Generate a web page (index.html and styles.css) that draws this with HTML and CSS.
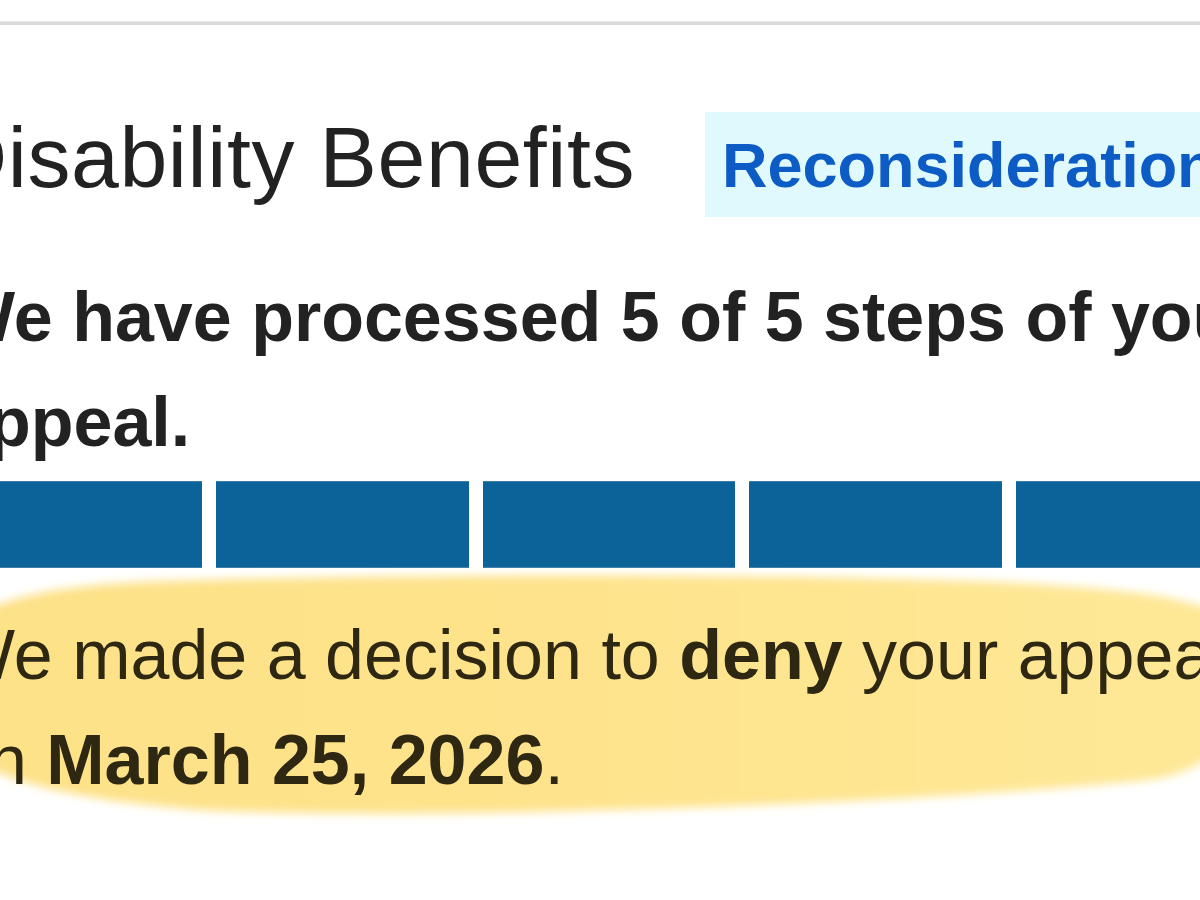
FILE: index.html
```html
<!DOCTYPE html>
<html lang="en">
<head>
<meta charset="utf-8">
<title>Disability Benefits – Reconsideration</title>
<link rel="stylesheet" href="styles.css">
</head>
<body>
<div class="topline"></div>
<main class="content">
  <header class="header">
    <h1 class="title">Disability Benefits</h1>
    <span class="badge">Reconsideration</span>
  </header>
  <p class="steps-text">We have processed 5 of 5 steps of your<br>appeal.</p>
  <div class="bar">
    <div class="seg"></div>
    <div class="seg"></div>
    <div class="seg"></div>
    <div class="seg"></div>
    <div class="seg"></div>
  </div>
  <div class="decision">
    <svg class="highlight" width="1320" height="300" viewBox="0 0 1320 300" aria-hidden="true">
      <defs>
        <filter id="soft" x="-10%" y="-30%" width="120%" height="160%">
          <feGaussianBlur stdDeviation="5"/>
        </filter>
        <linearGradient id="hl" x1="0" y1="0" x2="1" y2="0">
          <stop offset="0" stop-color="#fde187"/>
          <stop offset="0.5" stop-color="#fee38c"/>
          <stop offset="1" stop-color="#fee897"/>
        </linearGradient>
      </defs>
      <path filter="url(#soft)" fill="url(#hl)" d="M -20 130 C -20 40, 80 20, 251 17 C 551 9, 951 12, 1101 22 C 1201 29, 1281 37, 1301 77 C 1316 137, 1281 207, 1201 217 C 1051 232, 851 242, 651 247 C 501 252, 351 252, 251 247 C 131 237, -20 217, -20 130 Z"/>
    </svg>
    <p class="decision-text">We made a decision to <strong>deny</strong> your appeal<br>on <strong>March 25, 2026</strong>.</p>
  </div>
</main>
</body>
</html>
```
FILE: styles.css
```css
html, body {
  margin: 0;
  padding: 0;
  background: #ffffff;
}

body {
  width: 1200px;
  height: 900px;
  overflow: hidden;
  font-family: "Liberation Sans", Arial, Helvetica, sans-serif;
  color: #222222;
}

.topline {
  margin-top: 21px;
  height: 4px;
  background: #dadada;
  border-top: 1px solid #e6e6e6;
  box-sizing: border-box;
}

.content {
  margin-left: -51px;
  width: 1320px;
}

.header {
  display: grid;
  grid-template-columns: 756px auto;
  align-items: baseline;
  margin-top: 87px;
}

.title {
  margin: 0 0 0 -4px;
  font-size: 86px;
  font-weight: 400;
  line-height: 1;
  letter-spacing: 0.6px;
  color: #222222;
  white-space: nowrap;
}

.badge {
  display: block;
  padding: 2px 17px 0 17px;
  line-height: 103px;
  font-size: 63px;
  font-weight: 700;
  color: #0d5bc4;
  background: #e0f9fc;
  white-space: nowrap;
}

.steps-text {
  margin: 48px 0 0 0;
  font-size: 70px;
  font-weight: 700;
  line-height: 105px;
  color: #222222;
  white-space: nowrap;
}

.bar {
  display: grid;
  grid-template-columns: repeat(5, 1fr);
  gap: 14px;
  height: 87px;
  margin-top: 6px;
}

.seg {
  background: #0b6399;
  border-top: 1px solid #3c7ea8;
  border-bottom: 1px solid #3c7ea8;
}

.decision {
  position: relative;
  margin-top: 35px;
}

.highlight {
  position: absolute;
  left: 0;
  top: -40px;
  z-index: 0;
  overflow: visible;
}

.decision-text {
  position: relative;
  z-index: 1;
  margin: 0;
  font-size: 70px;
  font-weight: 400;
  line-height: 105px;
  color: #2e2812;
  white-space: nowrap;
}

.decision-text strong {
  font-weight: 700;
}
```
